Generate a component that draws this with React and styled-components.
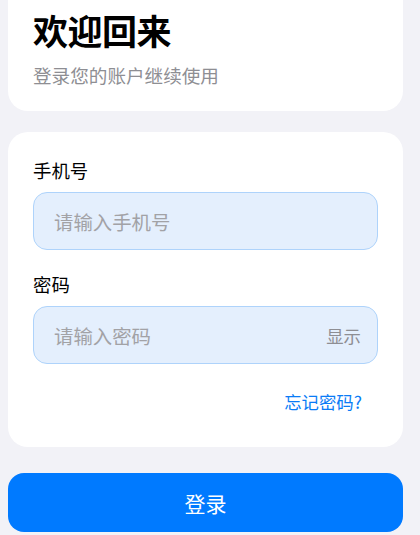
import styled, { createGlobalStyle } from "styled-components";

const GlobalStyle = createGlobalStyle`
  html, body {
    margin: 0;
    padding: 0;
    background: #f2f2f7;
    overflow: hidden;
  }
  body {
    font-family: "Noto Sans CJK SC", "Noto Sans", sans-serif;
    -webkit-font-smoothing: antialiased;
  }
  * {
    box-sizing: border-box;
  }
`;

const Page = styled.div`
  display: flex;
  flex-direction: column;
  width: 420px;
  height: 535px;
  padding: 0 17px 0 8px;
  overflow: hidden;
`;

const Card = styled.section`
  display: flex;
  flex-direction: column;
  background: #ffffff;
  border-radius: 20px;
  padding: ${(p) => p.$padding};
  margin-top: ${(p) => p.$top || "0"};
`;

const Title = styled.h1`
  margin: 0;
  font-size: 35px;
  line-height: 40px;
  font-weight: 700;
  color: #000;
  letter-spacing: -0.5px;
`;

const Subtitle = styled.p`
  margin: 12px 0 0;
  font-size: 18.6px;
  line-height: 26px;
  color: #8e8e93;
`;

const Field = styled.div`
  display: flex;
  flex-direction: column;
  gap: 9px;
  margin-top: ${(p) => p.$top || "0"};
`;

const Label = styled.label`
  font-size: 18.4px;
  line-height: 26px;
  color: #000;
`;

const InputBox = styled.div`
  display: flex;
  align-items: center;
  height: 58px;
  padding: 0 16px 0 20px;
  background: #e4effd;
  border: 1px solid #aed3fb;
  border-radius: 14px;
`;

const Input = styled.input`
  flex: 1;
  min-width: 0;
  border: none;
  outline: none;
  background: transparent;
  padding: 0;
  font-family: inherit;
  font-size: 19.4px;
  color: #000;
  &::placeholder {
    color: #a2a2a6;
  }
`;

const ToggleButton = styled.button`
  border: none;
  background: none;
  padding: 0;
  font-family: inherit;
  font-size: 17.4px;
  color: #8e8e93;
  cursor: pointer;
`;

const ForgotRow = styled.div`
  display: flex;
  justify-content: flex-end;
  margin-top: 26px;
  padding-right: 16px;
`;

const LinkButton = styled.button`
  border: none;
  background: none;
  padding: 0;
  font-family: inherit;
  font-size: 17.4px;
  line-height: 24px;
  color: #0a7cf6;
  cursor: pointer;
`;

const SubmitButton = styled.button`
  display: flex;
  align-items: center;
  justify-content: center;
  height: 59px;
  margin-top: 26px;
  border: none;
  border-radius: 16px;
  background: #007aff;
  color: #fff;
  font-family: inherit;
  font-size: 21px;
  cursor: pointer;
`;

export default function App() {
  return (
    <>
      <GlobalStyle />
      <Page>
        <Card $top="-20px" $padding="30px 25px 23px">
          <Title>欢迎回来</Title>
          <Subtitle>登录您的账户继续使用</Subtitle>
        </Card>
        <Card $top="21px" $padding="25px 25px 33px">
          <Field>
            <Label>手机号</Label>
            <InputBox>
              <Input type="tel" placeholder="请输入手机号" />
            </InputBox>
          </Field>
          <Field $top="21px">
            <Label>密码</Label>
            <InputBox>
              <Input type="password" placeholder="请输入密码" />
              <ToggleButton type="button">显示</ToggleButton>
            </InputBox>
          </Field>
          <ForgotRow>
            <LinkButton type="button">忘记密码?</LinkButton>
          </ForgotRow>
        </Card>
        <SubmitButton type="button">登录</SubmitButton>
      </Page>
    </>
  );
}
